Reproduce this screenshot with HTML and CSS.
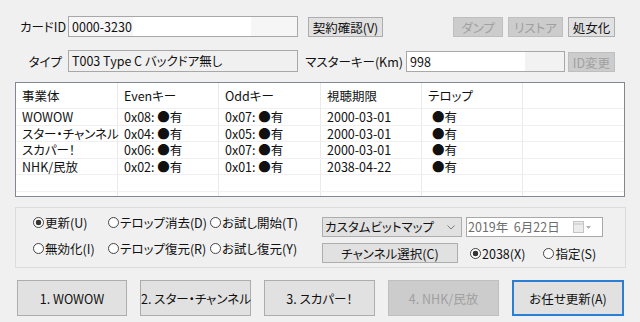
FILE: index.html
```html
<!DOCTYPE html>
<html lang="ja">
<head>
    <meta charset="UTF-8">
    <title>B-CAS Tool</title>
    <link rel="stylesheet" href="styles.css">
</head>
<body>

<div class="dialog">

    <!-- Card ID / actions -->
    <div class="row row-1">
        <span class="lbl">カードID</span>
        <div class="tb tb-card">0000-3230</div>
        <button class="btn btn-verify">契約確認(V)</button>
        <button class="btn btn-dump" disabled>ダンプ</button>
        <button class="btn btn-restore" disabled>リストア</button>
        <button class="btn btn-virgin">処女化</button>
    </div>

    <!-- Type / master key -->
    <div class="row row-2">
        <span class="lbl lbl-type">タイプ</span>
        <div class="tb tb-type">T003 Type C バックドア無し</div>
        <span class="lbl lbl-km">マスターキー(Km)</span>
        <div class="tb tb-km">998</div>
        <button class="btn btn-idchg" disabled>ID変更</button>
    </div>

    <!-- Contract list -->
    <div class="list">
        <div class="list-row list-head">
            <span>事業体</span><span>Evenキー</span><span>Oddキー</span><span>視聴期限</span><span>テロップ</span><span></span>
        </div>
        <div class="list-row">
            <span>WOWOW</span><span>0x08: ●有</span><span>0x07: ●有</span><span>2000-03-01</span><span class="telop">●有</span><span></span>
        </div>
        <div class="list-row">
            <span>スター・チャンネル</span><span>0x04: ●有</span><span>0x05: ●有</span><span>2000-03-01</span><span class="telop">●有</span><span></span>
        </div>
        <div class="list-row">
            <span>スカパー！</span><span>0x06: ●有</span><span>0x07: ●有</span><span>2000-03-01</span><span class="telop">●有</span><span></span>
        </div>
        <div class="list-row">
            <span>NHK/民放</span><span>0x02: ●有</span><span>0x01: ●有</span><span>2038-04-22</span><span class="telop">●有</span><span></span>
        </div>
        <div class="list-row">
            <span></span><span></span><span></span><span></span><span></span><span></span>
        </div>
        <div class="list-row">
            <span></span><span></span><span></span><span></span><span></span><span></span>
        </div>
    </div>

    <!-- Mode options -->
    <div class="group">
        <div class="modes">
            <span class="radio checked">更新(U)</span>
            <span class="radio">テロップ消去(D)</span>
            <span class="radio">お試し開始(T)</span>
            <span class="radio">無効化(I)</span>
            <span class="radio">テロップ復元(R)</span>
            <span class="radio">お試し復元(Y)</span>
        </div>
        <div class="side">
            <div class="combo">
                カスタムビットマップ
                <svg class="chev" width="8" height="5" viewBox="0 0 8 5"><polyline points="0.5,0.5 4,4 7.5,0.5" fill="none" stroke="#7a7a7a" stroke-width="1"/></svg>
            </div>
            <div class="date">
                2019年&nbsp; 6月22日
                <svg class="cal" width="20" height="12" viewBox="0 0 20 12">
                    <rect x="0.5" y="0.5" width="10" height="11" fill="#ececec" stroke="#c4c4c4"/>
                    <line x1="1" y1="3" x2="10" y2="3" stroke="#c4c4c4"/>
                    <polygon points="13,5 18,5 15.5,8" fill="#b0b0b0"/>
                </svg>
            </div>
            <button class="btn btn-channel">チャンネル選択(C)</button>
            <div class="years">
                <span class="radio checked">2038(X)</span>
                <span class="radio">指定(S)</span>
            </div>
        </div>
    </div>

    <!-- Operator buttons -->
    <div class="actions">
        <button class="btn">1. WOWOW</button>
        <button class="btn">2. スター・チャンネル</button>
        <button class="btn">3. スカパー！</button>
        <button class="btn" disabled>4. NHK/民放</button>
        <button class="btn btn-default">お任せ更新(A)</button>
    </div>

</div>

</body>
</html>
```

FILE: styles.css
```css
body {
    margin: 0;
    background-color: #f0f0f0;
    font-family: "Noto Sans CJK JP", "Noto Sans", sans-serif;
    font-size: 12.5px;
    font-feature-settings: "palt";
    color: #111;
}

.dialog {
    width: 640px;
    height: 322px;
    padding-top: 16px;
    box-sizing: border-box;
    overflow: hidden;
}

.row {
    display: flex;
    align-items: center;
}

.row-1 {
    height: 21px;
}

.row-2 {
    height: 22px;
    margin-top: 13px;
}

.lbl {
    width: 66px;
    text-align: right;
    white-space: nowrap;
    box-sizing: border-box;
}

.lbl-type {
    padding-right: 4px;
}

.lbl-km {
    width: 106px;
    padding-right: 1px;
}

/* text boxes */
.tb {
    box-sizing: border-box;
    height: 21px;
    line-height: 19px;
    margin-left: 2px;
    padding: 0 3px;
    border: 1px solid #a8a8a8;
    white-space: nowrap;
}

.tb-card {
    width: 230px;
    background: linear-gradient(to right, #f6f6f6 64px, #fff 64px, #fff 182px, #f6f6f6 182px);
}

.tb-type {
    width: 230px;
    height: 22px;
    line-height: 20px;
    background-color: #f0f0f0;
}

.tb-km {
    width: 159px;
    background: linear-gradient(to right, #fff 118px, #f2f2f2 118px);
}

/* buttons */
.btn {
    font: inherit;
    font-feature-settings: "palt";
    color: #111;
    background-color: #e1e1e1;
    border: 1px solid #adadad;
    padding: 0;
    box-sizing: border-box;
    white-space: nowrap;
}

.btn:disabled {
    background-color: #cccccc;
    border-color: #bfbfbf;
    color: #a0a0a0;
}

.btn-verify {
    width: 75px;
    height: 20px;
    margin-left: 10px;
}

.btn-dump {
    width: 50px;
    height: 20px;
    margin-left: 70px;
}

.btn-restore {
    width: 55px;
    height: 20px;
    margin-left: 5px;
}

.btn-virgin {
    width: 47px;
    height: 20px;
    margin-left: 5px;
}

.btn-idchg {
    width: 47px;
    height: 20px;
    margin-left: 3px;
    align-self: flex-end;
}

/* list view */
.list {
    margin: 10px 0 0 15px;
    width: 610px;
    height: 115px;
    border: 1px solid #828790;
    background-color: #fff;
    box-sizing: border-box;
    overflow: hidden;
}

.list-row {
    display: grid;
    grid-template-columns: 102px 101px 102px 101px 101px 1fr;
    height: 16.5px;
    line-height: 16px;
    border-bottom: 1px solid #f0f0f0;
    box-sizing: border-box;
}

.list-row span {
    padding-left: 6px;
    border-right: 1px solid #eaeaea;
    white-space: nowrap;
}

.list-row span:last-child {
    border-right: none;
}

.list-head {
    height: 26px;
    line-height: 26px;
}

.list-row .telop {
    padding-left: 10px;
}

/* options group */
.group {
    display: flex;
    margin: 10px 0 0 15px;
    width: 611px;
    height: 61px;
    border: 1px solid #dcdcdc;
    box-sizing: border-box;
}

.modes {
    width: 306px;
    padding: 1px 0 0 17px;
    box-sizing: border-box;
    display: grid;
    grid-template-columns: 75px 102px auto;
    grid-auto-rows: 26px;
    align-items: center;
}

.radio {
    display: flex;
    align-items: center;
    white-space: nowrap;
}

.radio::before {
    content: "";
    width: 11px;
    height: 11px;
    margin-right: 1px;
    border: 1px solid #444;
    border-radius: 50%;
    background-color: #fff;
    box-sizing: border-box;
    flex: none;
}

.radio.checked::before {
    background: radial-gradient(circle, #333 0 2.6px, #fff 3.1px);
}

.side {
    display: grid;
    grid-template-columns: 140px 137px;
    grid-auto-rows: 20px;
    column-gap: 4px;
    row-gap: 6px;
    padding-top: 9px;
}

.combo {
    position: relative;
    background-color: #e1e1e1;
    border: 1px solid #adadad;
    box-sizing: border-box;
    padding-left: 2px;
    line-height: 18px;
    white-space: nowrap;
}

.chev {
    position: absolute;
    right: 6px;
    top: 7px;
}

.date {
    position: relative;
    background-color: #fff;
    border: 1px solid #a8a8a8;
    box-sizing: border-box;
    padding-left: 1px;
    line-height: 18px;
    color: #6d6d6d;
    white-space: nowrap;
}

.cal {
    position: absolute;
    right: 9px;
    top: 3px;
}

.btn-channel {
    width: 136px;
    height: 20px;
}

.years {
    display: flex;
    align-items: center;
    gap: 18px;
    padding-left: 4px;
}

/* bottom buttons */
.actions {
    display: grid;
    grid-template-columns: 110px 111px 111px 111px 112px;
    column-gap: 13px;
    margin: 12px 0 0 17px;
    height: 36px;
}

.actions .btn {
    height: 36px;
}

.btn-default {
    border: 2px solid #2a7fd4;
}
```
